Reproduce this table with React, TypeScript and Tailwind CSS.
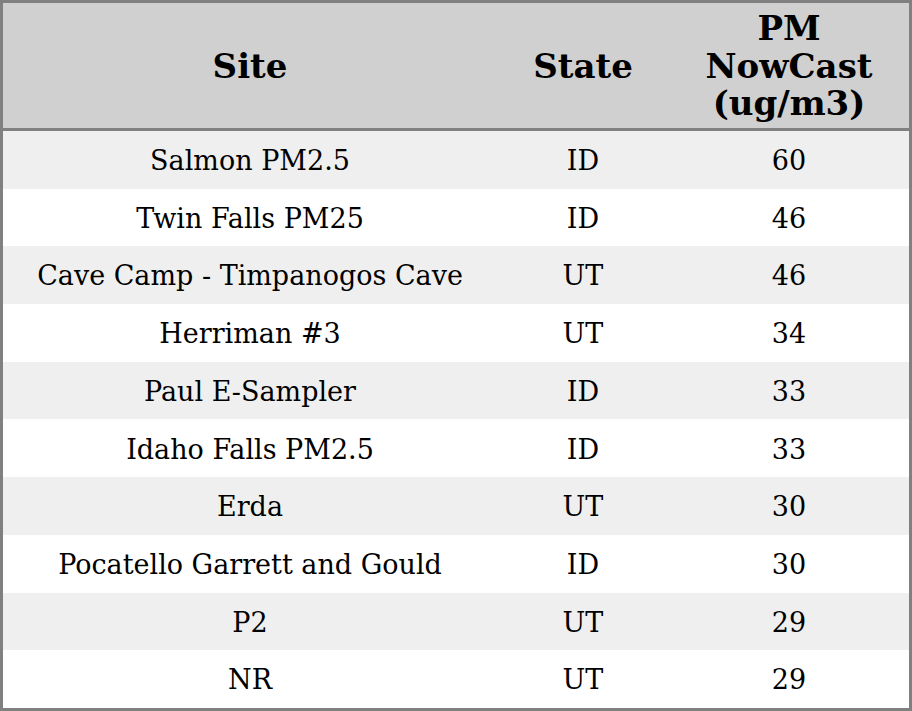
import React from 'react';

interface Reading {
  site: string;
  state: string;
  value: number;
}

const readings: Reading[] = [
  { site: 'Salmon PM2.5', state: 'ID', value: 60 },
  { site: 'Twin Falls PM25', state: 'ID', value: 46 },
  { site: 'Cave Camp - Timpanogos Cave', state: 'UT', value: 46 },
  { site: 'Herriman #3', state: 'UT', value: 34 },
  { site: 'Paul E-Sampler', state: 'ID', value: 33 },
  { site: 'Idaho Falls PM2.5', state: 'ID', value: 33 },
  { site: 'Erda', state: 'UT', value: 30 },
  { site: 'Pocatello Garrett and Gould', state: 'ID', value: 30 },
  { site: 'P2', state: 'UT', value: 29 },
  { site: 'NR', state: 'UT', value: 29 },
];

const App: React.FC = () => {
  return (
    <div className="w-[912px] h-[711px] bg-white border-[3px] border-[#808080] font-['DejaVu_Serif',serif] text-black">
      <table className="w-[906px] border-separate border-spacing-0 table-fixed">
        <colgroup>
          <col className="w-[494px]" />
          <col className="w-[172px]" />
          <col className="w-[240px]" />
        </colgroup>
        <thead>
          <tr className="bg-[#d0d0d0]">
            <th className="h-[128px] p-0 pt-[2px] border-b-[3px] border-[#808080] text-[34px] font-bold leading-[37.5px] text-center align-middle">Site</th>
            <th className="h-[128px] p-0 pt-[2px] border-b-[3px] border-[#808080] text-[34px] font-bold leading-[37.5px] text-center align-middle">State</th>
            <th className="h-[128px] p-0 pt-[2px] border-b-[3px] border-[#808080] text-[34px] font-bold leading-[37.5px] text-center align-middle">
              PM<br />NowCast<br />(ug/m3)
            </th>
          </tr>
        </thead>
        <tbody>
          {readings.map((r, i) => (
            <tr key={r.site} className={i % 2 === 0 ? 'bg-[#efefef]' : 'bg-white'}>
              <td className="h-[57.7px] p-0 pt-[3px] text-[27px] text-center align-middle whitespace-nowrap">{r.site}</td>
              <td className="h-[57.7px] p-0 pt-[3px] text-[27px] text-center align-middle">{r.state}</td>
              <td className="h-[57.7px] p-0 pt-[3px] text-[27px] text-center align-middle">{r.value}</td>
            </tr>
          ))}
        </tbody>
      </table>
    </div>
  );
};

export default App;
